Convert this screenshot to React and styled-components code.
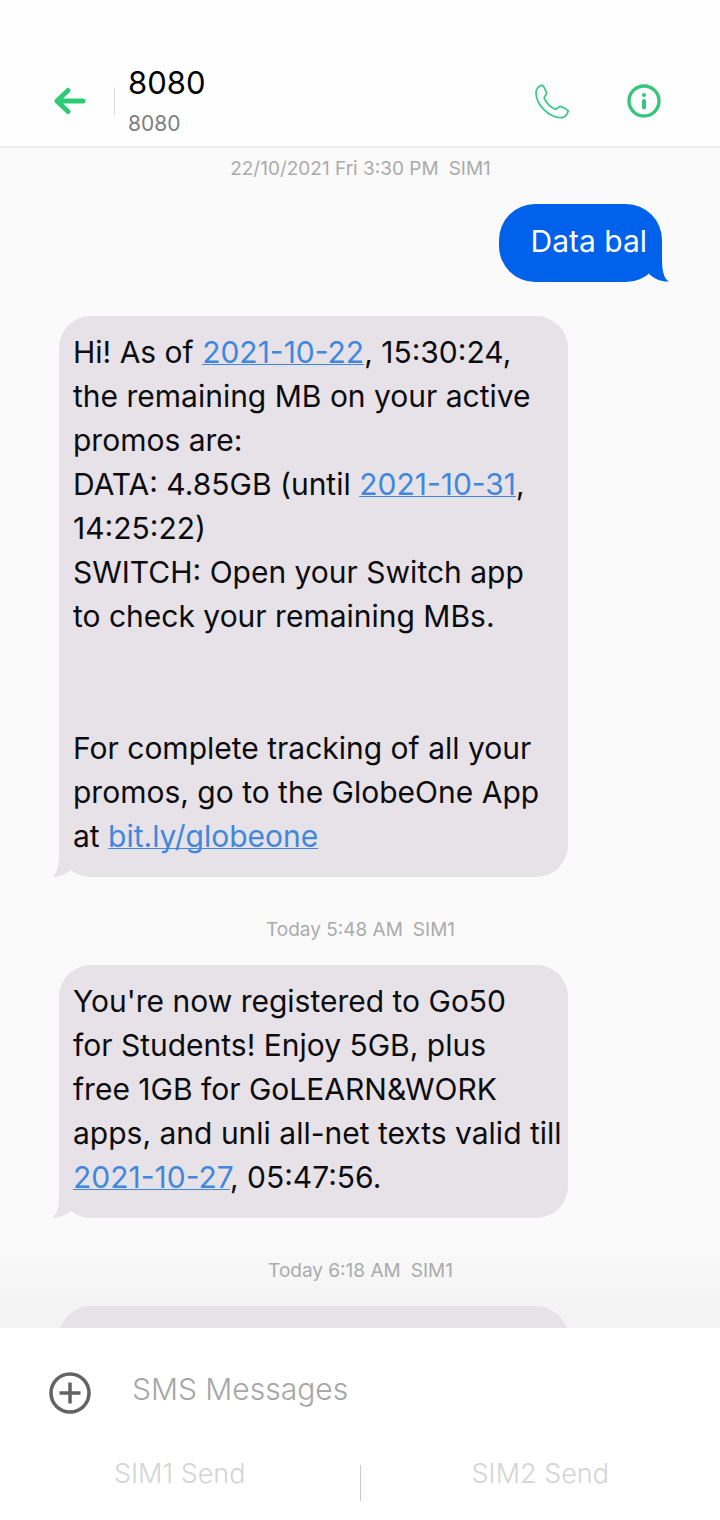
import React from "react";
import styled, { createGlobalStyle } from "styled-components";

const MESSAGES = [
  { id: 1, kind: "stamp", text: "22/10/2021 Fri 3:30 PM", sim: "SIM1" },
  { id: 2, kind: "sent", parts: ["Data bal"] },
  {
    id: 3,
    kind: "received",
    parts: [
      "Hi! As of ",
      { label: "2021-10-22" },
      ", 15:30:24,\nthe remaining MB on your active\npromos are:\nDATA: 4.85GB (until ",
      { label: "2021-10-31" },
      ",\n14:25:22)\nSWITCH: Open your Switch app\nto check your remaining MBs.\n\n\nFor complete tracking of all your\npromos, go to the GlobeOne App\nat ",
      { label: "bit.ly/globeone" },
    ],
  },
  { id: 4, kind: "stamp", text: "Today 5:48 AM", sim: "SIM1" },
  {
    id: 5,
    kind: "received",
    parts: [
      "You're now registered to Go50\nfor Students! Enjoy 5GB, plus\nfree 1GB for GoLEARN&WORK\napps, and unli all-net texts valid till\n",
      { label: "2021-10-27" },
      ", 05:47:56.",
    ],
  },
  { id: 6, kind: "stamp", text: "Today 6:18 AM", sim: "SIM1" },
  { id: 7, kind: "received", parts: [] },
];

const Message = ({ kind, parts }) => {
  const sent = kind === "sent";
  return (
    <Bubble $sent={sent}>
      {parts.map((part, i) =>
        typeof part === "string" ? (
          part
        ) : (
          <MessageLink key={i} href="#">
            {part.label}
          </MessageLink>
        )
      )}
      <Tail $sent={sent} viewBox="0 0 24 40" aria-hidden="true">
        <path d="M7 0V16C7 27 6 36 0 39.500C7 40 14 37 19 33L24 24V0Z" />
      </Tail>
    </Bubble>
  );
};

const App = () => {
  return (
    <>
      <GlobalStyle />
      <Page>
        <Header>
          <IconButton aria-label="Back">
            <svg width="34" height="34" viewBox="0 0 34 34" fill="none">
              <path
                d="M16 6.500L5 17L16 27.500M5 17H31"
                stroke="#2ecb77"
                strokeWidth="5"
                strokeLinecap="round"
                strokeLinejoin="round"
              />
            </svg>
          </IconButton>
          <HeaderDivider />
          <Contact>
            <Name>8080</Name>
            <Number>8080</Number>
          </Contact>
          <Actions>
            <IconButton aria-label="Call">
              <svg width="36" height="36" viewBox="0 0 36 36" fill="none">
                <path
                  d="M2.200 7.500C3.500 4.500 6 2.500 8.500 2.200C10 4 12 7.500 12.800 10.300C12.300 12 10.300 13 10.200 14.800C11.600 19.500 16.500 24.300 21.400 26.200C23.300 26.200 24.400 23.900 26.200 23.400C29 24.200 32.500 26.100 34.200 27.900C33.600 30.700 31.500 33.500 28.800 34.500C15 36 0.500 20.500 2.200 7.500Z"
                  stroke="#3ecb88"
                  strokeWidth="1.800"
                  strokeLinejoin="round"
                />
              </svg>
            </IconButton>
            <IconButton aria-label="Details">
              <svg width="36" height="36" viewBox="0 0 36 36" fill="none">
                <circle cx="18" cy="18" r="15" stroke="#34c77b" strokeWidth="3.400" />
                <circle cx="18" cy="12" r="2" fill="#34c77b" />
                <path
                  d="M18 18V24.500"
                  stroke="#34c77b"
                  strokeWidth="4"
                  strokeLinecap="round"
                />
              </svg>
            </IconButton>
          </Actions>
        </Header>

        <Thread>
          {MESSAGES.map((m) =>
            m.kind === "stamp" ? (
              <Stamp key={m.id}>
                <span>{m.text}</span>
                <span>{m.sim}</span>
              </Stamp>
            ) : (
              <Message key={m.id} kind={m.kind} parts={m.parts} />
            )
          )}
        </Thread>

        <Composer>
          <InputRow>
            <IconButton aria-label="Add attachment">
              <svg width="42" height="42" viewBox="0 0 42 42" fill="none">
                <circle cx="21" cy="21" r="19" stroke="#636363" strokeWidth="3.500" />
                <path d="M21 10.500V31.500M10.500 21H31.500" stroke="#636363" strokeWidth="3.500" />
              </svg>
            </IconButton>
            <TextInput
              type="text"
              placeholder="SMS Messages"
              aria-label="SMS Messages"
            />
          </InputRow>
          <SendRow>
            <SendButton>SIM1 Send</SendButton>
            <SendDivider />
            <SendButton>SIM2 Send</SendButton>
          </SendRow>
        </Composer>
      </Page>
    </>
  );
};

const GlobalStyle = createGlobalStyle`
  * {
    box-sizing: border-box;
  }
  body {
    margin: 0;
    font-family: Inter, "Liberation Sans", sans-serif;
    background-color: #ffffff;
  }
`;

const Page = styled.div`
  height: 100vh;
  display: flex;
  flex-direction: column;
`;

const Header = styled.header`
  display: flex;
  align-items: center;
  padding: 60px 58px 4px 52px;
  background-color: #fefeff;
  border-bottom: 2px solid #eceeef;
`;

const IconButton = styled.button`
  display: flex;
  flex-shrink: 0;
  padding: 0;
  border: none;
  background: none;
  cursor: pointer;
`;

const HeaderDivider = styled.div`
  width: 1px;
  height: 28px;
  margin: 0 13px 0 28px;
  background-color: #d8d8d8;
`;

const Contact = styled.div`
  display: flex;
  flex-direction: column;
  flex: 1;
`;

const Name = styled.h1`
  margin: 0;
  font-size: 31px;
  font-weight: 400;
  line-height: 46px;
  color: #000000;
`;

const Number = styled.span`
  font-size: 21px;
  line-height: 36px;
  color: #808080;
`;

const Actions = styled.div`
  display: flex;
  gap: 56px;
`;

const Thread = styled.main`
  flex: 1;
  min-height: 0;
  overflow: hidden;
  display: flex;
  flex-direction: column;
  padding: 7px 58px 0 59px;
  background: linear-gradient(#fafafa 92%, #f2f2f2);
`;

const Stamp = styled.div`
  display: flex;
  flex-shrink: 0;
  justify-content: center;
  gap: 10px;
  margin-bottom: 21px;
  font-size: 19px;
  line-height: 28px;
  color: #ababab;
`;

const Bubble = styled.div`
  position: relative;
  isolation: isolate;
  flex-shrink: 0;
  align-self: ${(props) => (props.$sent ? "flex-end" : "flex-start")};
  width: ${(props) => (props.$sent ? "auto" : "100%")};
  max-width: 509px;
  min-height: 78px;
  margin-bottom: ${(props) => (props.$sent ? "34px" : "39px")};
  padding: ${(props) => (props.$sent ? "15px 15px 19px 31px" : "14px 0 19px 14px")};
  border-radius: ${(props) => (props.$sent ? "36px" : "32px")};
  background-color: ${(props) => (props.$sent ? "#0061ea" : "#e6e2e8")};
  color: ${(props) => (props.$sent ? "#ffffff" : "#0c0c0e")};
  font-size: 30px;
  line-height: 44px;
  white-space: pre-line;
`;

const Tail = styled.svg`
  position: absolute;
  z-index: -1;
  bottom: 0;
  width: 24px;
  height: 40px;
  fill: ${(props) => (props.$sent ? "#0061ea" : "#e6e2e8")};
  ${(props) => (props.$sent ? "right: -7px; transform: scaleX(-1);" : "left: -7px;")}
`;

const MessageLink = styled.a`
  color: #3f88dc;
  text-decoration: underline;
  text-decoration-thickness: 1px;
  text-underline-offset: 1px;
  text-decoration-skip-ink: none;
`;

const Composer = styled.footer`
  padding: 36px 0 19px;
  background-color: #ffffff;
`;

const InputRow = styled.div`
  display: flex;
  align-items: center;
  gap: 41px;
  padding: 0 49px;
`;

const TextInput = styled.input`
  flex: 1;
  min-width: 0;
  height: 58px;
  padding: 0 0 8px;
  border: none;
  outline: none;
  background: none;
  font-family: inherit;
  font-size: 30px;
  font-weight: 300;
  &::placeholder {
    color: #a6a6a6;
    opacity: 1;
  }
`;

const SendRow = styled.div`
  display: flex;
  align-items: flex-end;
  margin-top: 34px;
`;

const SendDivider = styled.div`
  width: 1px;
  height: 36px;
  background-color: #c8c8c8;
`;

const SendButton = styled.button`
  flex: 1;
  padding: 0 0 9px;
  border: none;
  background: none;
  font-family: inherit;
  font-size: 27px;
  font-weight: 300;
  line-height: 36px;
  color: #d4d4d4;
  cursor: pointer;
`;

export default App;
